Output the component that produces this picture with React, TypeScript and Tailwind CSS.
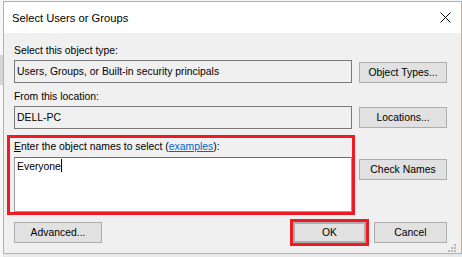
import React from 'react';

const Button = ({ children, className = '' }: { children: React.ReactNode; className?: string }) => (
  <div
    className={`h-[21px] flex items-center justify-center bg-[#e1e1e1] border border-[#adadad] text-[10.4px] leading-[16px] ${className}`}
  >
    {children}
  </div>
);

const Field = ({ children }: { children: React.ReactNode }) => (
  <div className="flex-1 h-[23px] flex items-center pl-[2px] bg-[#f0f0f0] border border-[#7a7a7a] text-[10.4px] leading-[16px]">
    {children}
  </div>
);

const Label = ({ children, className = '' }: { children: React.ReactNode; className?: string }) => (
  <div className={`h-[16px] text-[10.4px] leading-[16px] ${className}`}>{children}</div>
);

const CloseIcon = () => (
  <svg width="11" height="11" viewBox="0 0 11 11" className="block">
    <path d="M0.5 0.5 L10.5 10.5 M10.5 0.5 L0.5 10.5" stroke="#000" strokeWidth="1" fill="none" />
  </svg>
);

const Grip = () => (
  <svg width="8" height="8" viewBox="0 0 8 8" className="absolute right-[5px] bottom-[1px]">
    {[
      [6, 0],
      [3, 3],
      [6, 3],
      [0, 6],
      [3, 6],
      [6, 6],
    ].map(([x, y]) => (
      <rect key={`${x}-${y}`} x={x} y={y} width="2" height="2" fill="#b8b8b8" />
    ))}
  </svg>
);

export default function App() {
  return (
    <div className="w-[462px] h-[257px] flex overflow-hidden bg-[#f5f5f5] text-black font-['Liberation_Sans',Arial,sans-serif]">
      {/* strip of the desktop left of the window */}
      <div className="w-[3px] flex flex-col">
        <div className="h-[55px] bg-[#f7f7f7]" />
        <div className="h-[30px] bg-[#d6d6d6]" />
        <div className="flex-1 bg-[#f7f7f7]" />
      </div>

      <div className="flex-1 flex flex-col">
        <div className="h-[1px] bg-[#f7f7f7]" />

        <div className="relative h-[253px] flex flex-col border border-[#dba878] bg-[#f0f0f0]">
          <div className="h-[31px] flex items-center justify-between pl-[8px] pr-[10px] bg-white">
            <span className="text-[11.2px] leading-[16px]">Select Users or Groups</span>
            <CloseIcon />
          </div>

          <div className="flex-1 flex flex-col pt-[10px] pl-[10px] pr-[14px]">
            <Label>Select this object type:</Label>
            <div className="mt-[1px] flex items-end gap-[7px]">
              <Field>Users, Groups, or Built-in security principals</Field>
              <Button className="w-[88px]">Object Types...</Button>
            </div>

            <Label className="mt-[6px]">From this location:</Label>
            <div className="mt-[1px] flex items-center gap-[7px]">
              <Field>DELL-PC</Field>
              <Button className="w-[88px]">Locations...</Button>
            </div>

            <Label className="mt-[10px]">
              <span className="underline">E</span>nter the object names to select (
              <span className="text-[#0066cc] underline">examples</span>):
            </Label>
            <div className="mt-[2px] flex items-start gap-[7px]">
              <div className="flex-1 h-[55px] pl-[2px] pt-[1px] bg-white border border-[#9a9a9a] border-t-[#6e6e6e] text-[10.4px] leading-[16px]">
                Everyone
                <span className="inline-block w-[1px] h-[13px] bg-black align-[-2px]" />
              </div>
              <Button className="w-[88px] mt-[2px]">Check Names</Button>
            </div>

            <div className="mt-[10px] flex items-center">
              <Button className="w-[88px]">Advanced...</Button>
              <div className="flex-1" />
              <Button className="w-[73px] border-2 border-[#0078d7] outline-3 outline-solid outline-[#ed1c24]">
                OK
              </Button>
              <Button className="w-[73px] ml-[8px]">Cancel</Button>
            </div>
          </div>

          {/* red annotation round the names box */}
          <div className="absolute left-[3px] top-[133px] w-[348px] h-[80px] border-3 border-[#ed1c24] pointer-events-none" />
          <Grip />
        </div>

        <div className="flex-1 bg-[#e9e9e9]" />
      </div>
    </div>
  );
}
